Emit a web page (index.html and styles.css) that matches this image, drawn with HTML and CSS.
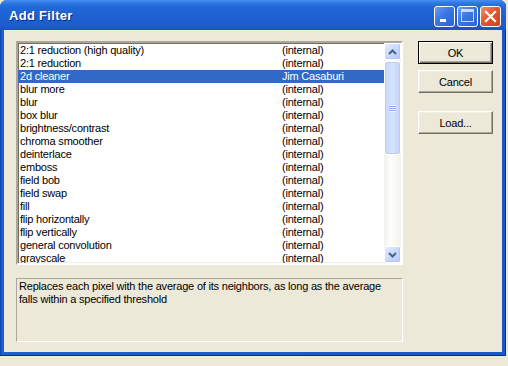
FILE: index.html
```html
<!DOCTYPE html>
<html lang="en">
<head>
    <meta charset="UTF-8">
    <title>Add Filter</title>
    <link rel="stylesheet" href="styles.css">
</head>
<body>
    <div class="window">
        <div class="titlebar">
            <span class="title">Add Filter</span>
            <div class="caption-buttons">
                <div class="cap"><span class="min-glyph"></span></div>
                <div class="cap"><span class="max-glyph"></span></div>
                <div class="cap close">
                    <svg width="13" height="13" viewBox="0 0 13 13"><path d="M2 2 L11 11 M11 2 L2 11" stroke="#fff" stroke-width="2.2" stroke-linecap="square"/></svg>
                </div>
            </div>
        </div>
        <div class="client">
            <div class="top">
                <div class="listbox">
                    <div class="rows">
                        <div class="row"><span>2:1 reduction (high quality)</span><span>(internal)</span></div>
                        <div class="row"><span>2:1 reduction</span><span>(internal)</span></div>
                        <div class="row selected"><span>2d cleaner</span><span>Jim Casaburi</span></div>
                        <div class="row"><span>blur more</span><span>(internal)</span></div>
                        <div class="row"><span>blur</span><span>(internal)</span></div>
                        <div class="row"><span>box blur</span><span>(internal)</span></div>
                        <div class="row"><span>brightness/contrast</span><span>(internal)</span></div>
                        <div class="row"><span>chroma smoother</span><span>(internal)</span></div>
                        <div class="row"><span>deinterlace</span><span>(internal)</span></div>
                        <div class="row"><span>emboss</span><span>(internal)</span></div>
                        <div class="row"><span>field bob</span><span>(internal)</span></div>
                        <div class="row"><span>field swap</span><span>(internal)</span></div>
                        <div class="row"><span>fill</span><span>(internal)</span></div>
                        <div class="row"><span>flip horizontally</span><span>(internal)</span></div>
                        <div class="row"><span>flip vertically</span><span>(internal)</span></div>
                        <div class="row"><span>general convolution</span><span>(internal)</span></div>
                        <div class="row"><span>grayscale</span><span>(internal)</span></div>
                    </div>
                    <div class="scrollbar">
                        <div class="sb-btn">
                            <svg width="9" height="6" viewBox="0 0 9 6"><path d="M1 5 L4.5 1.5 L8 5" fill="none" stroke="#4d6185" stroke-width="2"/></svg>
                        </div>
                        <div class="thumb">
                            <span class="grip"></span>
                        </div>
                        <div class="track"></div>
                        <div class="sb-btn">
                            <svg width="9" height="6" viewBox="0 0 9 6"><path d="M1 1 L4.5 4.5 L8 1" fill="none" stroke="#4d6185" stroke-width="2"/></svg>
                        </div>
                    </div>
                </div>
                <div class="buttons">
                    <div class="btn default"><span>OK</span></div>
                    <div class="btn cancel"><span>Cancel</span></div>
                    <div class="btn load"><span>Load...</span></div>
                </div>
            </div>
            <div class="desc">Replaces each pixel with the average of its neighbors, as long as the average<br>falls within a specified threshold</div>
        </div>
    </div>
</body>
</html>
```

FILE: styles.css
```css
body {
    margin: 0;
    background: #ece9d8;
    font-family: "Liberation Sans", Arial, sans-serif;
    font-size: 11px;
    letter-spacing: -0.2px;
    color: #000;
}
.window {
    width: 506px;
    height: 356px;
    display: flex;
    flex-direction: column;
    background: linear-gradient(90deg, #0a3fb0 0, #1c5fd0 2px, #1a57c8 100%);
    border-radius: 7px 7px 0 0;
    box-shadow: inset 0 -1px 0 #0a2f8f, inset -1px 0 0 #0a2f8f;
}
.titlebar {
    height: 30px;
    display: flex;
    align-items: center;
    justify-content: space-between;
    padding: 0 5px 0 9px;
    border-radius: 7px 7px 0 0;
    background: linear-gradient(#4a90f0 0, #2f78e4 3px, #2268d8 7px, #1f62d2 50%, #1c5ccc 85%, #1a54c0 100%);
}
.title {
    color: #fff;
    font-family: "Liberation Sans", Arial, sans-serif;
    font-weight: bold;
    font-size: 13px;
    letter-spacing: 0.3px;
    text-shadow: 1px 1px 0 #0b2c86;
}
.caption-buttons {
    display: flex;
    gap: 2px;
    margin-top: 3px;
}
.cap {
    width: 19px;
    height: 19px;
    border: 1px solid #fff;
    border-radius: 3px;
    background: linear-gradient(135deg, #6a9cf5 0, #3a76e6 45%, #2a63d6 100%);
    display: flex;
    align-items: flex-end;
    justify-content: center;
    box-sizing: content-box;
}
.cap.close {
    background: linear-gradient(135deg, #f09070 0, #e2582e 45%, #cc4420 100%);
    align-items: center;
}
.min-glyph {
    width: 6px;
    height: 3px;
    background: #fff;
    margin-bottom: 4px;
    margin-right: 4px;
}
.max-glyph {
    width: 11px;
    height: 9px;
    border: 1px solid #fff;
    border-top-width: 3px;
    margin-bottom: 4px;
    opacity: 0.7;
}
.client {
    flex: 1;
    margin: 0 4px 4px 4px;
    background: #ece9d8;
    padding: 11px 0 0 12px;
}
.top {
    display: flex;
    gap: 15px;
}
.listbox {
    width: 383px;
    height: 220px;
    display: flex;
    background: #fff;
    border: 2px solid;
    border-color: #aca899 #fff #fff #aca899;
    box-shadow: inset 1px 1px 0 #716f64, inset -1px -1px 0 #f1efe2;
    overflow: hidden;
}
.rows {
    flex: 1;
    padding-top: 1px;
}
.row {
    height: 13px;
    line-height: 13px;
    display: grid;
    grid-template-columns: 262px 1fr;
    padding-left: 2px;
    white-space: nowrap;
}
.row.selected {
    background: #316ac5;
    color: #fff;
}
.scrollbar {
    width: 17px;
    display: flex;
    flex-direction: column;
    background: linear-gradient(90deg, #f3f1ec 0, #fefefb 40%, #f3f1ec 100%);
}
.sb-btn {
    height: 15px;
    border: 1px solid #fff;
    border-radius: 2px;
    background: linear-gradient(135deg, #e4ecfd 0, #c4d6fb 60%, #b2c8f6 100%);
    display: flex;
    align-items: center;
    justify-content: center;
    box-shadow: inset -1px -1px 0 #b4c8f5;
}
.thumb {
    height: 92px;
    margin-top: 1px;
    border: 1px solid #fff;
    border-radius: 3px;
    background: linear-gradient(90deg, #c8d8fc 0, #d6e2fd 50%, #c4d4fa 100%);
    box-shadow: inset 0 0 0 1px #b6cbf6;
    display: flex;
    align-items: center;
    justify-content: center;
}
.grip {
    width: 7px;
    height: 7px;
    background: repeating-linear-gradient(#eef3fe 0, #eef3fe 1px, #8faaf0 1px, #8faaf0 2px);
}
.track {
    flex: 1;
}
.buttons {
    display: flex;
    flex-direction: column;
    width: 75px;
}
.btn {
    height: 23px;
    box-sizing: border-box;
    display: flex;
    align-items: center;
    justify-content: center;
    border: 1px solid;
    border-color: #fff #716f64 #716f64 #fff;
    box-shadow: inset -1px -1px 0 #aca899, inset 1px 1px 0 #f1efe2;
}
.btn.default {
    border: 1px solid #000;
    box-shadow: inset 1px 1px 0 #fff, inset -1px -1px 0 #716f64, inset -2px -2px 0 #aca899;
}
.btn.cancel {
    margin-top: 6px;
}
.btn.load {
    margin-top: 18px;
}
.desc {
    width: 381px;
    height: 61px;
    margin-top: 13px;
    padding: 1px 2px 0 2px;
    border: 1px solid;
    border-color: #aca899 #fff #fff #aca899;
    line-height: 13px;
    white-space: nowrap;
}
```
